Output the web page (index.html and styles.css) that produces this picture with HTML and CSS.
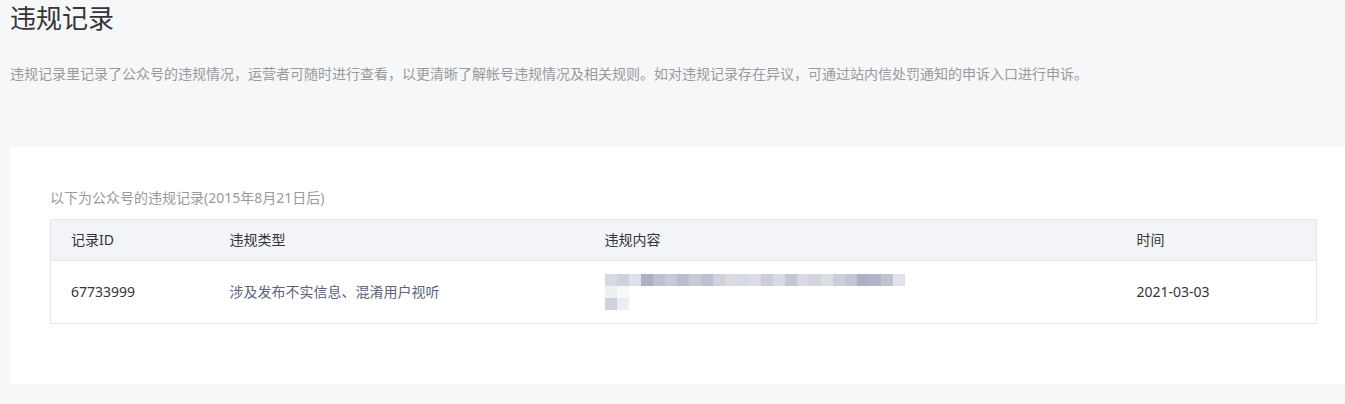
FILE: index.html
```html
<!DOCTYPE html>
<html lang="zh-CN">
<head>
<meta charset="utf-8">
<title>违规记录</title>
<link rel="stylesheet" href="styles.css">
</head>
<body>
<div class="page">
  <div class="head">
    <h1 class="title">违规记录</h1>
    <p class="desc">违规记录里记录了公众号的违规情况，运营者可随时进行查看，以更清晰了解帐号违规情况及相关规则。如对违规记录存在异议，可通过站内信处罚通知的申诉入口进行申诉。</p>
  </div>
  <div class="card">
    <p class="sub">以下为公众号的违规记录(2015年8月21日后)</p>
    <table class="tbl">
      <colgroup>
        <col class="c1"><col class="c2"><col class="c3"><col class="c4">
      </colgroup>
      <thead>
        <tr><th>记录ID</th><th>违规类型</th><th>违规内容</th><th>时间</th></tr>
      </thead>
      <tbody>
        <tr>
          <td class="id">67733999</td>
          <td class="type">涉及发布不实信息、混淆用户视听</td>
          <td>
            <div class="mosaic">
              <div class="mrow">
                <i style="background:#d8d9e0"></i><i style="background:#cdd1dd"></i><i style="background:#dfe2ec"></i><i style="background:#adb0c6"></i><i style="background:#bcc2d2"></i><i style="background:#c5cad6"></i><i style="background:#b9bed2"></i><i style="background:#c5cad5"></i><i style="background:#bbc0d2"></i><i style="background:#cfd1dc"></i><i style="background:#dcdae0"></i><i style="background:#d5d9e2"></i><i style="background:#dddce6"></i><i style="background:#cbcfda"></i><i style="background:#d7dbe6"></i><i style="background:#c4c5d3"></i><i style="background:#dad9e2"></i><i style="background:#d3d6e1"></i><i style="background:#dcdee6"></i><i style="background:#cccdda"></i><i style="background:#c3c7d5"></i><i style="background:#acb1c8"></i><i style="background:#b1b4c9"></i><i style="background:#c1c2d0"></i><i style="background:#e0e3ee"></i>
              </div>
              <div class="mrow">
                <i style="background:#eeeff4"></i><i style="background:#f7f8fa"></i>
              </div>
              <div class="mrow">
                <i style="background:#cfd1dc"></i><i style="background:#eceef3"></i>
              </div>
            </div>
          </td>
          <td class="time">2021-03-03</td>
        </tr>
      </tbody>
    </table>
  </div>
</div>
</body>
</html>
```

FILE: styles.css
```css
html, body {
  margin: 0;
  padding: 0;
  background: #f6f7f9;
  overflow: hidden;
}
body {
  font-family: "Noto Sans", "Noto Sans CJK SC", sans-serif;
  color: #353535;
}
.page {
  padding: 0 0 0 10px;
}
.title {
  margin: 0;
  font-size: 26px;
  line-height: 36px;
  font-weight: 400;
  color: #353535;
}
.desc {
  margin: 28px 0 0;
  font-size: 14px;
  line-height: 20px;
  color: #9a9a9a;
}
.card {
  margin-top: 63px;
  background: #fff;
  border-radius: 2px 0 0 2px;
  padding: 41px 0 60px 40px;
}
.sub {
  margin: 0 0 11px;
  font-size: 14px;
  line-height: 20px;
  color: #9a9a9a;
}
.tbl {
  width: 1266px;
  table-layout: fixed;
  border-collapse: collapse;
  font-size: 14px;
}
.c1 { width: 159px; }
.c2 { width: 375px; }
.c3 { width: 532px; }
.c4 { width: 200px; }
.tbl th, .tbl td {
  border-top: 1px solid #e4e6eb;
  border-bottom: 1px solid #e4e6eb;
  text-align: left;
  font-weight: 400;
  padding: 0 0 0 20px;
  vertical-align: middle;
}
.tbl th:first-child, .tbl td:first-child {
  border-left: 1px solid #e4e6eb;
}
.tbl th:last-child, .tbl td:last-child {
  border-right: 1px solid #e4e6eb;
}
.tbl thead tr {
  background: #f3f4f7;
  height: 41px;
}
.tbl th {
  color: #353535;
  line-height: 20px;
}
.tbl tbody tr {
  height: 63px;
}
.tbl td {
  line-height: 20px;
}
.id, .time {
  color: #353535;
}
.type {
  color: #5c637c;
}
.mosaic {
  display: flex;
  flex-direction: column;
}
.mrow {
  display: flex;
  height: 12px;
}
.mrow i {
  display: block;
  width: 12px;
  height: 12px;
}
```
